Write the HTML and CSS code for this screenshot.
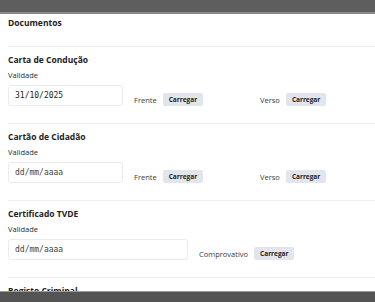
FILE: index.html
```html
<!DOCTYPE html>
<html lang="pt">
<head>
  <meta charset="UTF-8">
  <title>Documentos</title>
  <link rel="stylesheet" href="styles.css">
</head>
<body>

  <div class="top-bar"></div>

  <div class="panel">
    <h2 class="panel-title">Documentos</h2>

    <div class="doc">
      <h3>Carta de Condução</h3>
      <label>Validade</label>
      <div class="doc-row">
        <div class="date-box">31/10/2025</div>
        <div class="upload">
          <span>Frente</span>
          <button>Carregar</button>
        </div>
        <div class="upload">
          <span>Verso</span>
          <button>Carregar</button>
        </div>
      </div>
    </div>

    <div class="doc">
      <h3>Cartão de Cidadão</h3>
      <label>Validade</label>
      <div class="doc-row">
        <div class="date-box empty">dd/mm/aaaa</div>
        <div class="upload">
          <span>Frente</span>
          <button>Carregar</button>
        </div>
        <div class="upload">
          <span>Verso</span>
          <button>Carregar</button>
        </div>
      </div>
    </div>

    <div class="doc">
      <h3>Certificado TVDE</h3>
      <label>Validade</label>
      <div class="doc-row">
        <div class="date-box wide empty">dd/mm/aaaa</div>
        <div class="upload">
          <span>Comprovativo</span>
          <button>Carregar</button>
        </div>
      </div>
    </div>

    <div class="doc last">
      <h3>Registo Criminal</h3>
    </div>
  </div>

  <div class="bottom-bar"></div>

</body>
</html>
```

FILE: styles.css
```css
body {
  margin: 0;
  background: white;
  font-family: "Open Sans", Arial, sans-serif;
  color: #222;
  overflow: hidden;
}

.top-bar {
  height: 12px;
  background: #5e5e5e;
  border-bottom: 2px solid #8a8a8a;
}

.panel {
  padding: 0 0 0 8px;
}

.panel-title {
  margin: 0;
  padding: 3px 0 0;
  height: 29px;
  font-size: 8.5px;
  font-weight: 700;
  line-height: 12px;
  border-bottom: 1px solid #eeeeee;
}

.doc {
  height: 76px;
  border-bottom: 1px solid #eeeeee;
}

.doc.last {
  height: 24px;
  border-bottom: none;
}

.doc h3 {
  margin: 0;
  padding-top: 7px;
  font-size: 8.5px;
  font-weight: 700;
  line-height: 12px;
}

.doc label {
  display: block;
  margin-top: 4px;
  font-size: 7.5px;
  line-height: 11px;
  color: #2a2a2a;
}

.doc-row {
  display: flex;
  align-items: flex-end;
  margin-top: 4px;
}

.date-box {
  box-sizing: border-box;
  width: 116px;
  height: 21px;
  padding: 0 6px;
  border: 1px solid #ececec;
  border-radius: 3px;
  font-family: "DejaVu Sans Mono", monospace;
  font-size: 8px;
  line-height: 19px;
  color: #222;
}

.date-box.empty {
  color: #444;
}

.date-box.wide {
  width: 180px;
}

.upload {
  display: flex;
  align-items: center;
  gap: 6px;
  margin-left: 11px;
  width: 116px;
}

.upload span {
  font-size: 7.5px;
  color: #3a3a3a;
}

.upload button {
  height: 13px;
  padding: 0 6px;
  border: none;
  border-radius: 2px;
  background-color: #e2e6ec;
  font-family: "Open Sans", Arial, sans-serif;
  font-size: 6.5px;
  font-weight: 700;
  color: #222;
  cursor: pointer;
}

.bottom-bar {
  position: fixed;
  left: 0;
  right: 0;
  bottom: 0;
  height: 10px;
  background: #545454;
  border-top: 1px solid #9a9a9a;
}
```
